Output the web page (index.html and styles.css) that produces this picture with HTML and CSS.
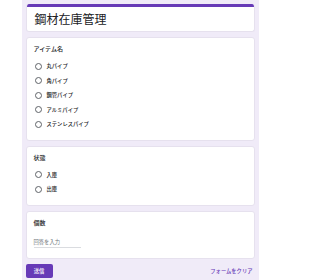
FILE: index.html
```html
<!DOCTYPE html>
<html lang="ja">
<head>
<meta charset="utf-8">
<link rel="stylesheet" href="styles.css">
</head>
<body>
<div class="page">
  <div class="card title-card">
    <div class="bar"></div>
    <h1 class="title">鋼材在庫管理</h1>
  </div>
  <div class="card">
    <div class="label">アイテム名</div>
    <div class="options">
      <div class="option"><span class="radio"></span><span class="opt-text">丸パイプ</span></div>
      <div class="option"><span class="radio"></span><span class="opt-text">角パイプ</span></div>
      <div class="option"><span class="radio"></span><span class="opt-text">鋼管パイプ</span></div>
      <div class="option"><span class="radio"></span><span class="opt-text">アルミパイプ</span></div>
      <div class="option"><span class="radio"></span><span class="opt-text">ステンレスパイプ</span></div>
    </div>
  </div>
  <div class="card">
    <div class="label">状態</div>
    <div class="options">
      <div class="option"><span class="radio"></span><span class="opt-text">入庫</span></div>
      <div class="option"><span class="radio"></span><span class="opt-text">出庫</span></div>
    </div>
  </div>
  <div class="card qty-card">
    <div class="label">個数</div>
    <div class="input">回答を入力</div>
  </div>
  <div class="actions">
    <button class="submit">送信</button>
    <span class="clear">フォームをクリア</span>
  </div>
</div>
</body>
</html>
```
FILE: styles.css
```css
html, body {
  margin: 0;
  padding: 0;
  background: #ffffff;
  height: 280px;
  overflow: hidden;
}
body {
  font-family: "Noto Sans CJK JP", "Noto Sans", sans-serif;
  color: #202124;
}
.page {
  width: 237px;
  margin: 0 0 0 21.5px;
  background: #f0ebf8;
  padding: 4px 4px 0;
  box-sizing: border-box;
  height: 280px;
}
.card {
  background: #ffffff;
  border: 1px solid #e6e1ee;
  border-radius: 3px;
  padding: 7px 7px 8px;
  margin-bottom: 5px;
}
.title-card {
  padding: 0;
  overflow: hidden;
  border-top: none;
}
.bar {
  height: 3px;
  background: #673ab7;
}
.title {
  margin: 0;
  font-size: 12px;
  font-weight: 400;
  line-height: 14px;
  padding: 5px 8px 5px;
}
.label {
  font-size: 6px;
  line-height: 8px;
  font-weight: 500;
}
.options {
  margin-top: 6px;
}
.option {
  height: 14.5px;
  display: flex;
  align-items: center;
}
.radio {
  width: 5px;
  height: 5px;
  border: 0.9px solid #5f6368;
  border-radius: 50%;
  margin-left: 1px;
  margin-right: 5px;
}
.opt-text {
  font-size: 5.3px;
  line-height: 8px;
  font-weight: 500;
}
.qty-card {
  padding-bottom: 10px;
}
.input {
  margin-top: 11px;
  width: 47px;
  font-size: 5.3px;
  line-height: 8px;
  color: #70757a;
  border-bottom: 0.6px solid #dadce0;
  padding-bottom: 1px;
}
.actions {
  display: flex;
  justify-content: space-between;
  align-items: center;
}
.submit {
  width: 27px;
  height: 14px;
  background: #673ab7;
  color: #ffffff;
  border: none;
  border-radius: 2px;
  font-family: inherit;
  font-size: 5.3px;
  font-weight: 500;
  padding: 0;
}
.clear {
  font-size: 5.3px;
  color: #673ab7;
  font-weight: 500;
  margin-right: 2px;
}
```
